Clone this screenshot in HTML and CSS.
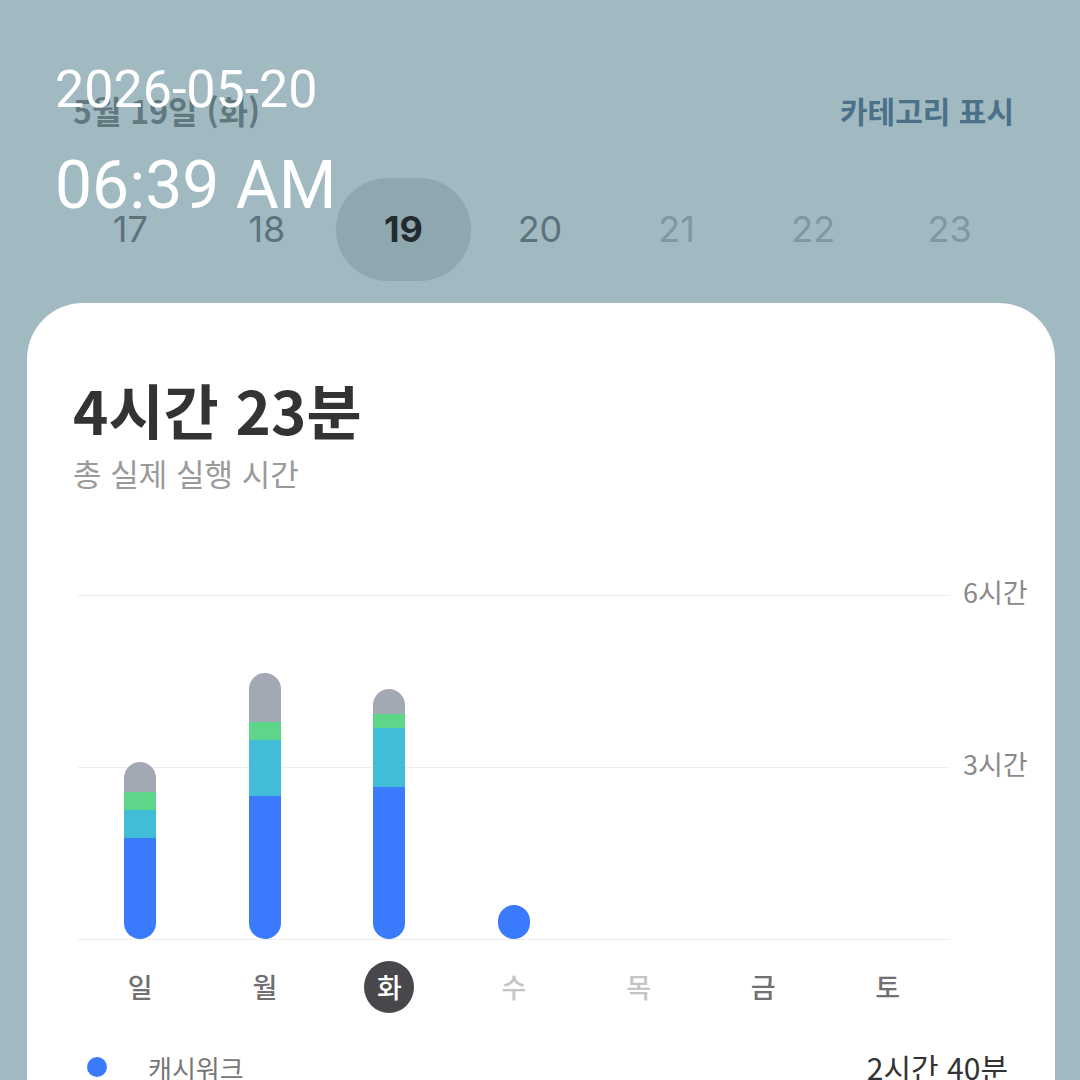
FILE: index.html
```html
<!DOCTYPE html>
<html lang="ko">
<head>
    <meta charset="UTF-8">
    <meta name="viewport" content="width=device-width, initial-scale=1.0">
    <title>실행 시간</title>
    <link rel="stylesheet" href="styles.css">
</head>
<body>
    <div class="overlay">
        <div class="overlayDate">2026-05-20</div>
        <div class="overlayTime">06:39 AM</div>
    </div>

    <div class="topBar">
        <span class="dateLabel">5월 19일 (화)</span>
        <span class="categoryToggle">카테고리 표시</span>
    </div>

    <div class="days">
        <div class="day past">17</div>
        <div class="day past">18</div>
        <div class="day selected">19</div>
        <div class="day past">20</div>
        <div class="day future">21</div>
        <div class="day future">22</div>
        <div class="day future">23</div>
    </div>

    <div class="card">
        <h1 class="total">4시간 23분</h1>
        <p class="totalLabel">총 실제 실행 시간</p>

        <div class="chart">
            <div class="plot">
                <div class="barCol">
                    <div class="bar">
                        <div class="seg gray" style="height: 30px"></div>
                        <div class="seg green" style="height: 18px"></div>
                        <div class="seg cyan" style="height: 28px"></div>
                        <div class="seg blue" style="height: 101px"></div>
                    </div>
                </div>
                <div class="barCol">
                    <div class="bar">
                        <div class="seg gray" style="height: 49px"></div>
                        <div class="seg green" style="height: 18px"></div>
                        <div class="seg cyan" style="height: 56px"></div>
                        <div class="seg blue" style="height: 143px"></div>
                    </div>
                </div>
                <div class="barCol">
                    <div class="bar">
                        <div class="seg gray" style="height: 25px"></div>
                        <div class="seg green" style="height: 14px"></div>
                        <div class="seg cyan" style="height: 59px"></div>
                        <div class="seg blue" style="height: 152px"></div>
                    </div>
                </div>
                <div class="barCol">
                    <div class="bar">
                        <div class="seg blue" style="height: 34px"></div>
                    </div>
                </div>
                <div class="barCol"></div>
                <div class="barCol"></div>
                <div class="barCol"></div>
            </div>
            <div class="axis">
                <span>6시간</span>
                <span>3시간</span>
            </div>
        </div>

        <div class="weekdays">
            <span>일</span>
            <span>월</span>
            <span class="today">화</span>
            <span class="faded">수</span>
            <span class="faded">목</span>
            <span>금</span>
            <span>토</span>
        </div>

        <div class="legendRow">
            <span class="dot"></span>
            <span class="legendName">캐시워크</span>
            <span class="legendTime">2시간 40분</span>
        </div>
    </div>
</body>
</html>
```

FILE: styles.css
```css
body {
    margin: 0;
    width: 1080px;
    height: 1080px;
    overflow: hidden;
    background-color: #a1bac2;
    font-family: "Noto Sans CJK KR", "Noto Sans", sans-serif;
    position: relative;
}

/* white date/time stamp laid over the screenshot */
.overlay {
    position: absolute;
    left: 55px;
    top: 60px;
    color: #ffffff;
    font-family: Roboto, "Liberation Sans", sans-serif;
    z-index: 2;
}
.overlayDate {
    font-size: 52px;
    line-height: 60px;
}
.overlayTime {
    margin-top: 30px;
    font-size: 66px;
    line-height: 72px;
}

.topBar {
    display: flex;
    justify-content: space-between;
    align-items: center;
    padding: 92px 66px 0 73px;
    height: 36px;
}
.dateLabel {
    font-size: 32px;
    font-weight: 700;
    color: #61787f;
}
.categoryToggle {
    font-size: 30px;
    font-weight: 700;
    color: #4b7189;
}

.days {
    display: grid;
    grid-template-columns: repeat(7, 1fr);
    padding: 0 62px;
    margin-top: 50px;
}
.day {
    height: 103px;
    line-height: 103px;
    text-align: center;
    font-family: Inter, "Noto Sans", sans-serif;
    font-size: 36px;
}
.past {
    color: #5d727b;
}
.future {
    color: #7f97a0;
}
.selected {
    justify-self: center;
    width: 135px;
    border-radius: 52px;
    background-color: #8fa7ae;
    color: #222a2d;
    font-weight: 700;
}

.card {
    margin: 22px 25px 0 27px;
    padding: 0 27px 0 46px;
    background-color: #ffffff;
    border-radius: 56px 56px 0 0;
    height: 800px;
    overflow: hidden;
}
.total {
    margin: 73px 0 0 0;
    font-size: 60px;
    line-height: 66px;
    font-weight: 700;
    color: #333333;
}
.totalLabel {
    margin: 10px 0 0 0;
    font-size: 31px;
    line-height: 42px;
    color: #9a9a9a;
}

.chart {
    display: flex;
    margin: 101px 0 0 5px;
}
.plot {
    flex: 1;
    height: 343px;
    display: grid;
    grid-template-columns: repeat(7, 1fr);
    align-items: end;
    border-top: 1px solid #eeeeee;
    border-bottom: 1px solid #eeeeee;
    background-image: linear-gradient(#eeeeee, #eeeeee);
    background-size: 100% 1px;
    background-position: 0 171px;
    background-repeat: no-repeat;
}
.barCol {
    display: flex;
    justify-content: center;
}
.bar {
    width: 32px;
    border-radius: 16px;
    overflow: hidden;
    display: flex;
    flex-direction: column;
}
.seg.gray { background-color: #a3a9b4; }
.seg.green { background-color: #5dd68a; }
.seg.cyan { background-color: #41bdd8; }
.seg.blue { background-color: #3a7bfd; }

.axis {
    width: 65px;
    padding-left: 13px;
    display: flex;
    flex-direction: column;
    gap: 136px;
    margin-top: -21px;
}
.axis span {
    height: 36px;
    line-height: 36px;
    font-size: 27px;
    color: #8a8a8a;
}

.weekdays {
    display: grid;
    grid-template-columns: repeat(7, 1fr);
    width: 872px;
    margin: 21px 0 0 5px;
}
.weekdays span {
    justify-self: center;
    width: 50px;
    height: 52px;
    line-height: 52px;
    text-align: center;
    font-size: 27px;
    font-weight: 500;
    color: #707070;
}
.weekdays .today {
    border-radius: 50%;
    background-color: #48484c;
    color: #ffffff;
}
.weekdays .faded {
    color: #c4c4c4;
}

.legendRow {
    display: flex;
    align-items: center;
    height: 40px;
    margin: 34px 20px 0 14px;
}
.dot {
    width: 20px;
    height: 20px;
    border-radius: 50%;
    background-color: #3a7bfd;
}
.legendName {
    margin-left: 41px;
    font-size: 26px;
    color: #777777;
}
.legendTime {
    margin-left: auto;
    font-size: 30px;
    color: #333333;
}
```
